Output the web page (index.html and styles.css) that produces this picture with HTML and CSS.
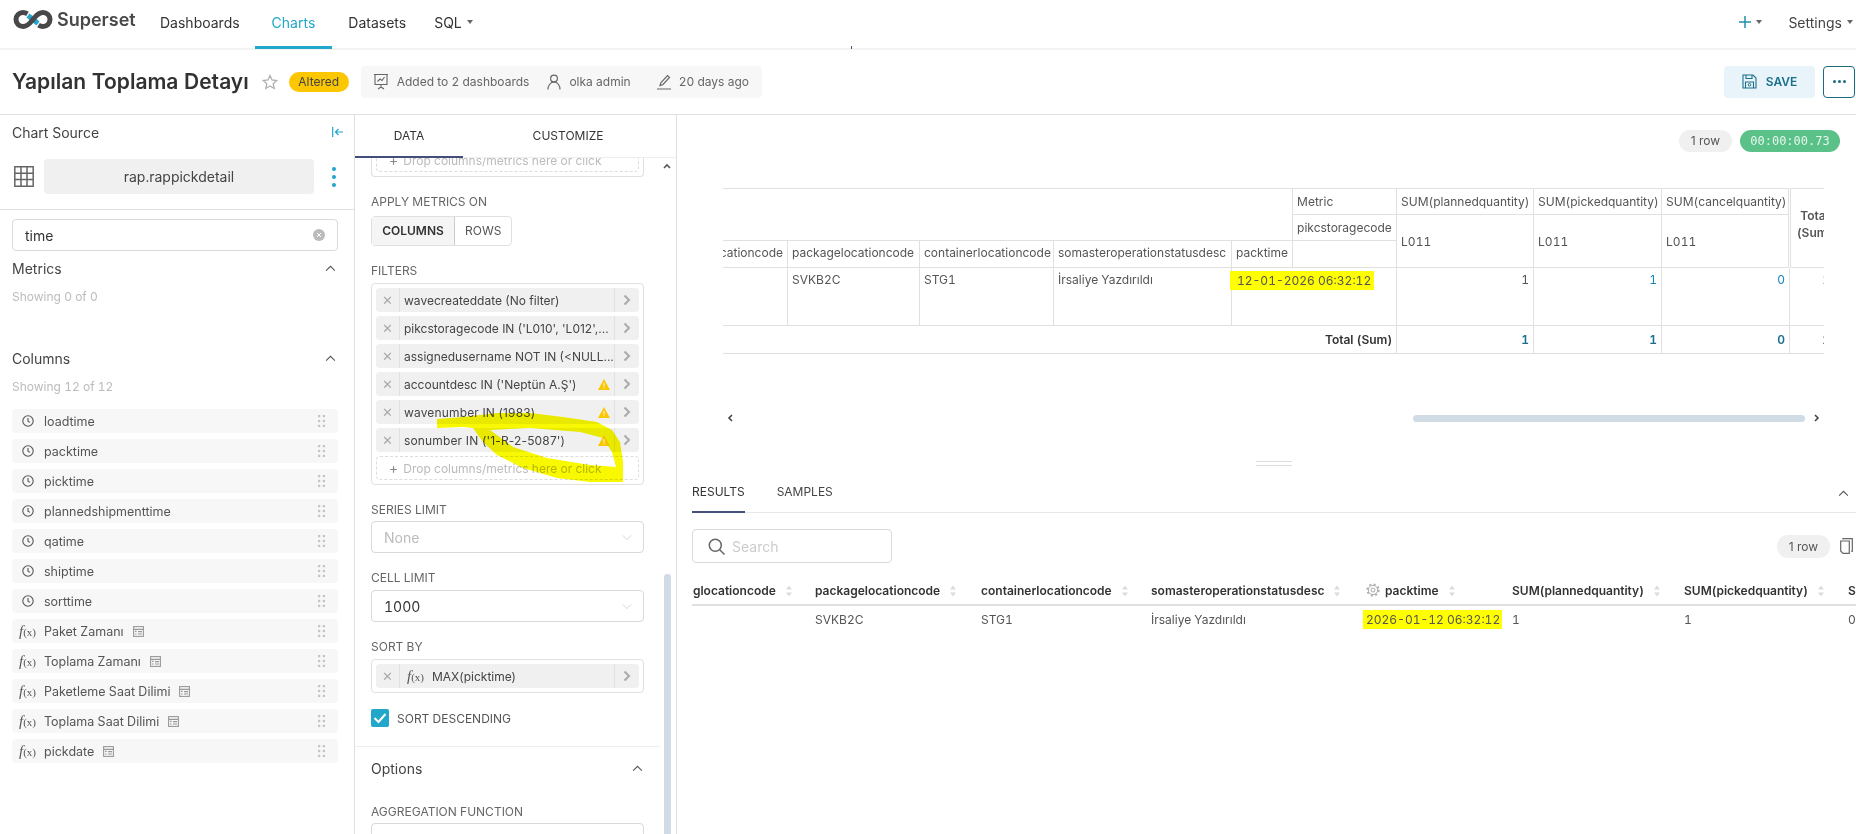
FILE: index.html
```html
<!DOCTYPE html>
<html lang="tr">
  <head>
    <meta charset="UTF-8" />
    <title>Superset</title>
    <link rel="stylesheet" href="styles.css">
  </head>
  <body>
    <svg class="defs" width="0" height="0">
      <symbol id="i-clock" viewBox="0 0 12 12">
        <circle cx="6" cy="6" r="5.2" fill="none" stroke="#555" stroke-width="1.1" />
        <path d="M6 3v3.2l2 1.2" fill="none" stroke="#555" stroke-width="1.1" />
      </symbol>
      <symbol id="i-drag" viewBox="0 0 7 12">
        <g fill="#c4c4c4">
          <rect x="0" y="0" width="2.2" height="2.2" /><rect x="4.8" y="0" width="2.2" height="2.2" />
          <rect x="0" y="4.9" width="2.2" height="2.2" /><rect x="4.8" y="4.9" width="2.2" height="2.2" />
          <rect x="0" y="9.8" width="2.2" height="2.2" /><rect x="4.8" y="9.8" width="2.2" height="2.2" />
        </g>
      </symbol>
      <symbol id="i-sql" viewBox="0 0 11 11">
        <rect x=".6" y=".6" width="9.8" height="9.8" fill="none" stroke="#999" stroke-width="1.1" />
        <path d="M.6 3.4h9.8M5 5.6h4M5 8h4M2 5.4h1.6M2 8h1.6" fill="none" stroke="#999" stroke-width="1.1" />
      </symbol>
      <symbol id="i-chev-up" viewBox="0 0 12 8">
        <path d="M1 6.5 6 1.5l5 5" fill="none" stroke="#555" stroke-width="1.2" />
      </symbol>
      <symbol id="i-chev-down" viewBox="0 0 12 8">
        <path d="M1 1.5 6 6.5l5-5" fill="none" stroke="#ccc" stroke-width="1" />
      </symbol>
      <symbol id="i-chev-right" viewBox="0 0 8 12">
        <path d="M1.500 1.500 6 6l-4.500 4.500" fill="none" stroke="#aaa" stroke-width="2" />
      </symbol>
      <symbol id="i-warn" viewBox="0 0 12 11">
        <path d="M6 0 12 11H0Z" fill="#fcc700" />
        <path d="M6 3.800v3.600M6 8.300v1.100" stroke="#fff" stroke-width="1" />
      </symbol>
      <symbol id="i-sort" viewBox="0 0 8 12">
        <path d="M4 .5 7 4.500H1ZM4 11.500 1 7.500h6Z" fill="#dcdcdc" />
      </symbol>
    </svg>

    <nav class="topnav">
      <a class="brand">
        <svg width="40" height="19" viewBox="0 0 40 19">
          <path d="M15 5.500 25 13.500" stroke="#20a7c9" stroke-width="5" />
          <path d="M14.500 3.800C13 2.900 11.500 2.500 10 2.500A7 7 0 0 0 10 16.500C15 16.500 17 13 20 9.500S25 2.500 30 2.500A7 7 0 0 1 30 16.500C28.500 16.500 27 16.100 25.500 15.200" fill="none" stroke="#484848" stroke-width="5" />
        </svg>
        <span>Superset</span>
      </a>
      <a class="nav-link first">Dashboards</a>
      <a class="nav-link active">Charts</a>
      <a class="nav-link after-active">Datasets</a>
      <a class="nav-link">SQL <b class="caret"></b></a>
      <span class="nav-tick"></span>
      <div class="nav-right">
        <span class="nav-plus">
          <svg width="12" height="12" viewBox="0 0 12 12"><path d="M6 0v12M0 6h12" stroke="#1f8fae" stroke-width="1.500" /></svg>
          <b class="caret"></b>
        </span>
        <span class="nav-settings">Settings <b class="caret"></b></span>
      </div>
    </nav>

    <header class="titlebar">
      <h1>Yapılan Toplama Detayı</h1>
      <svg class="star" width="16" height="16" viewBox="0 0 16 16">
        <path d="M8 1.500 10 6l4.800.5-3.600 3.200 1 4.800L8 12l-4.200 2.500 1-4.800L1.200 6.500 6 6Z" fill="none" stroke="#b0b0b0" stroke-width="1.300" />
      </svg>
      <span class="altered">Altered</span>
      <div class="meta">
        <svg width="16" height="17" viewBox="0 0 16 17">
          <path d="M1 1.500h14M2 1.500v10h12v-10M8 11.500V14M5 16l3-2 3 2M4.500 8.500 7 6l2 1.500L11.500 4" fill="none" stroke="#666" stroke-width="1.100" />
        </svg>
        <span class="meta-text">Added to 2 dashboards</span>
        <svg class="meta-user" width="14" height="16" viewBox="0 0 14 16">
          <circle cx="7" cy="4.500" r="3.400" fill="none" stroke="#666" stroke-width="1.200" />
          <path d="M1 15.500c0-4 2.500-7.500 6-7.500s6 3.500 6 7.500" fill="none" stroke="#666" stroke-width="1.200" />
        </svg>
        <span class="meta-text">olka admin</span>
        <svg class="meta-edit" width="14" height="16" viewBox="0 0 14 16">
          <path d="M3 11.500 4 8.500 10.500 1.500l2 2L6 10.500ZM0 15h14" fill="none" stroke="#666" stroke-width="1.200" />
        </svg>
        <span class="meta-text">20 days ago</span>
      </div>
      <div class="title-actions">
        <button class="btn-save">
          <svg width="15" height="15" viewBox="0 0 15 15">
            <path d="M1 1h10l3 3v10H1ZM4 1v3.500h6V1M3.500 14V8h8v6" fill="none" stroke="#1a6f8c" stroke-width="1.100" />
            <circle cx="7.500" cy="10.800" r="1.300" fill="none" stroke="#1a6f8c" />
          </svg>
          SAVE
        </button>
        <button class="btn-more"><i></i><i></i><i></i></button>
      </div>
    </header>

    <main class="explore">
      <aside class="source">
        <div class="source-head">
          <div class="source-title">
            <span>Chart Source</span>
            <svg width="11" height="10" viewBox="0 0 11 10"><path d="M.7 0v10M11 5H3.500M6.500 2 3.500 5l3 3" fill="none" stroke="#20a7c9" stroke-width="1.200" /></svg>
          </div>
          <div class="source-row">
            <svg width="20" height="21" viewBox="0 0 20 21">
              <path d="M.8.8h18.400v19.400H.8ZM.8 7.200h18.400M.8 13.600h18.400M7 .8v19.400M13 .8v19.400" fill="none" stroke="#666" stroke-width="1.500" />
            </svg>
            <div class="source-name">rap.rappickdetail</div>
            <span class="kebab"><i></i><i></i><i></i></span>
          </div>
        </div>
        <div class="source-body">
          <div class="column-search">
            <span>time</span>
            <svg width="12" height="12" viewBox="0 0 12 12">
              <circle cx="6" cy="6" r="6" fill="#bbb" /><path d="M4 4l4 4M8 4l-4 4" stroke="#fff" />
            </svg>
          </div>
          <div class="list-head list-metrics"><span>Metrics</span><svg width="11" height="7"><use href="#i-chev-up" /></svg></div>
          <div class="showing">Showing 0 of 0</div>
          <div class="list-head list-columns"><span>Columns</span><svg width="11" height="7"><use href="#i-chev-up" /></svg></div>
          <div class="showing">Showing 12 of 12</div>
          <ul class="columns">
            <li><svg class="type" width="12" height="12"><use href="#i-clock" /></svg><span>loadtime</span><svg class="drag" width="7" height="12"><use href="#i-drag" /></svg></li>
            <li><svg class="type" width="12" height="12"><use href="#i-clock" /></svg><span>packtime</span><svg class="drag" width="7" height="12"><use href="#i-drag" /></svg></li>
            <li><svg class="type" width="12" height="12"><use href="#i-clock" /></svg><span>picktime</span><svg class="drag" width="7" height="12"><use href="#i-drag" /></svg></li>
            <li><svg class="type" width="12" height="12"><use href="#i-clock" /></svg><span>plannedshipmenttime</span><svg class="drag" width="7" height="12"><use href="#i-drag" /></svg></li>
            <li><svg class="type" width="12" height="12"><use href="#i-clock" /></svg><span>qatime</span><svg class="drag" width="7" height="12"><use href="#i-drag" /></svg></li>
            <li><svg class="type" width="12" height="12"><use href="#i-clock" /></svg><span>shiptime</span><svg class="drag" width="7" height="12"><use href="#i-drag" /></svg></li>
            <li><svg class="type" width="12" height="12"><use href="#i-clock" /></svg><span>sorttime</span><svg class="drag" width="7" height="12"><use href="#i-drag" /></svg></li>
            <li><span class="fx"><i>f</i>(x)</span><span>Paket Zamanı</span><svg class="sql" width="11" height="11"><use href="#i-sql" /></svg><svg class="drag" width="7" height="12"><use href="#i-drag" /></svg></li>
            <li><span class="fx"><i>f</i>(x)</span><span>Toplama Zamanı</span><svg class="sql" width="11" height="11"><use href="#i-sql" /></svg><svg class="drag" width="7" height="12"><use href="#i-drag" /></svg></li>
            <li><span class="fx"><i>f</i>(x)</span><span>Paketleme Saat Dilimi</span><svg class="sql" width="11" height="11"><use href="#i-sql" /></svg><svg class="drag" width="7" height="12"><use href="#i-drag" /></svg></li>
            <li><span class="fx"><i>f</i>(x)</span><span>Toplama Saat Dilimi</span><svg class="sql" width="11" height="11"><use href="#i-sql" /></svg><svg class="drag" width="7" height="12"><use href="#i-drag" /></svg></li>
            <li><span class="fx"><i>f</i>(x)</span><span>pickdate</span><svg class="sql" width="11" height="11"><use href="#i-sql" /></svg><svg class="drag" width="7" height="12"><use href="#i-drag" /></svg></li>
          </ul>
        </div>
      </aside>

      <section class="controls">
        <div class="control-tabs">
          <div class="control-tab active">DATA</div>
          <div class="control-tab wide">CUSTOMIZE</div>
        </div>
        <div class="control-scroll">
          <svg class="scroll-up" width="8" height="6" viewBox="0 0 8 6"><path d="M1 5 4 2l3 3" fill="none" stroke="#555" stroke-width="1.600" /></svg>
          <div class="scroll-thumb"></div>

          <div class="drop-box cut">
            <div class="dropzone"><b>+</b> Drop columns/metrics here or click</div>
          </div>

          <div class="field">
            <div class="field-label roomy">APPLY METRICS ON</div>
            <div class="btn-group">
              <span class="selected">COLUMNS</span><span>ROWS</span>
            </div>
          </div>

          <div class="field">
            <div class="field-label">FILTERS</div>
            <div class="drop-box">
              <div class="pill"><span class="pill-x">✕</span><span class="pill-label">wavecreateddate (No filter)</span><span class="pill-arrow"><svg width="8" height="12"><use href="#i-chev-right" /></svg></span></div>
              <div class="pill"><span class="pill-x">✕</span><span class="pill-label">pikcstoragecode IN ('L010', 'L012',...</span><span class="pill-arrow"><svg width="8" height="12"><use href="#i-chev-right" /></svg></span></div>
              <div class="pill"><span class="pill-x">✕</span><span class="pill-label">assignedusername NOT IN (&lt;NULL...</span><span class="pill-arrow"><svg width="8" height="12"><use href="#i-chev-right" /></svg></span></div>
              <div class="pill"><span class="pill-x">✕</span><span class="pill-label">accountdesc IN ('Neptün A.Ş')</span><svg class="warn" width="12" height="11"><use href="#i-warn" /></svg><span class="pill-arrow"><svg width="8" height="12"><use href="#i-chev-right" /></svg></span></div>
              <div class="pill"><span class="pill-x">✕</span><span class="pill-label nums">wavenumber IN (1983)</span><svg class="warn" width="12" height="11"><use href="#i-warn" /></svg><span class="pill-arrow"><svg width="8" height="12"><use href="#i-chev-right" /></svg></span></div>
              <div class="pill"><span class="pill-x">✕</span><span class="pill-label nums">sonumber IN ('1-R-2-5087')</span><svg class="warn" width="12" height="11"><use href="#i-warn" /></svg><span class="pill-arrow"><svg width="8" height="12"><use href="#i-chev-right" /></svg></span></div>
              <div class="dropzone"><b>+</b> Drop columns/metrics here or click</div>
            </div>
          </div>

          <div class="field">
            <div class="field-label tight">SERIES LIMIT</div>
            <div class="select muted">None<svg width="10" height="7"><use href="#i-chev-down" /></svg></div>
          </div>

          <div class="field">
            <div class="field-label">CELL LIMIT</div>
            <div class="select">1000<svg width="10" height="7"><use href="#i-chev-down" /></svg></div>
          </div>

          <div class="field">
            <div class="field-label">SORT BY</div>
            <div class="drop-box">
              <div class="pill"><span class="pill-x">✕</span><span class="pill-label"><span class="fx small"><i>f</i>(x)</span>MAX(picktime)</span><span class="pill-arrow"><svg width="8" height="12"><use href="#i-chev-right" /></svg></span></div>
            </div>
          </div>

          <label class="check-row">
            <span class="checkbox"><svg width="14" height="12" viewBox="0 0 14 12"><path d="M1.500 6 5.500 10 12.500 2" fill="none" stroke="#fff" stroke-width="2" /></svg></span>
            SORT DESCENDING
          </label>

          <div class="section-head">
            <span>Options</span>
            <svg width="11" height="7"><use href="#i-chev-up" /></svg>
          </div>

          <div class="field-label agg">AGGREGATION FUNCTION</div>
          <div class="select"></div>
        </div>
      </section>

      <section class="workspace">
        <div class="chart-area">
          <div class="chart-status">
            <span class="row-pill">1 row</span>
            <span class="timer">00:00:00.73</span>
          </div>
          <div class="pivot-clip">
            <table class="pivot">
              <colgroup>
                <col class="p1"><col class="p2"><col class="p3"><col class="p4"><col class="p5">
                <col class="p6"><col class="p7"><col class="p8"><col class="p9"><col class="p10">
              </colgroup>
              <tr class="r1">
                <th colspan="5" rowspan="2" class="blank"></th>
                <th>Metric</th>
                <th>SUM(plannedquantity)</th>
                <th>SUM(pickedquantity)</th>
                <th>SUM(cancelquantity)</th>
                <th rowspan="3" class="total-head">Total<br>(Sum)</th>
              </tr>
              <tr class="r2">
                <th>pikcstoragecode</th>
                <th rowspan="2">L011</th>
                <th rowspan="2">L011</th>
                <th rowspan="2">L011</th>
              </tr>
              <tr class="r3">
                <th class="end">pickinglocationcode</th>
                <th>packagelocationcode</th>
                <th>containerlocationcode</th>
                <th>somasteroperationstatusdesc</th>
                <th>packtime</th>
                <th></th>
              </tr>
              <tr class="r4">
                <td></td>
                <td>SVKB2C</td>
                <td>STG1</td>
                <td>İrsaliye Yazdırıldı</td>
                <td colspan="2"><mark class="pivot-mark">12-01-2026 06:32:12</mark></td>
                <td class="num">1</td>
                <td class="num blue">1</td>
                <td class="num blue">0</td>
                <td class="num last">1</td>
              </tr>
              <tr class="r5">
                <th colspan="6" class="num">Total (Sum)</th>
                <th class="num teal">1</th>
                <th class="num teal">1</th>
                <th class="num teal">0</th>
                <th class="num last">1</th>
              </tr>
            </table>
          </div>
          <div class="pivot-scroll">
            <svg width="6" height="8" viewBox="0 0 6 8"><path d="M5 1 2 4l3 3" fill="none" stroke="#444" stroke-width="1.600" /></svg>
            <div class="pivot-thumb"></div>
            <svg width="6" height="8" viewBox="0 0 6 8"><path d="M1 1l3 3-3 3" fill="none" stroke="#444" stroke-width="1.600" /></svg>
          </div>
        </div>

        <div class="resize-handle"></div>

        <div class="results">
          <div class="result-tabs">
            <span class="result-tab active">RESULTS</span>
            <span class="result-tab">SAMPLES</span>
            <svg class="result-collapse" width="11" height="7"><use href="#i-chev-up" /></svg>
          </div>
          <div class="result-tools">
            <div class="result-search">
              <svg width="17" height="17" viewBox="0 0 17 17"><circle cx="7.300" cy="7.300" r="6" fill="none" stroke="#666" stroke-width="1.500" /><path d="m11.500 11.500 5 5" stroke="#666" stroke-width="1.500" /></svg>
              <span>Search</span>
            </div>
            <span class="row-pill second">1 row</span>
            <svg class="copy" width="13" height="16" viewBox="0 0 13 16"><path d="M3 1.500V.7h9.300v12.600h-1M.7 3h8.600v12.300H3L.7 13Z" fill="none" stroke="#666" stroke-width="1.200" /></svg>
          </div>
          <div class="grid-clip">
            <table class="grid">
              <colgroup>
                <col class="g1"><col class="g2"><col class="g3"><col class="g4"><col class="g5"><col class="g6"><col class="g7"><col class="g8">
              </colgroup>
              <tr>
                <th>pickinglocationcode<svg width="8" height="12"><use href="#i-sort" /></svg></th>
                <th>packagelocationcode<svg width="8" height="12"><use href="#i-sort" /></svg></th>
                <th>containerlocationcode<svg width="8" height="12"><use href="#i-sort" /></svg></th>
                <th>somasteroperationstatusdesc<svg width="8" height="12"><use href="#i-sort" /></svg></th>
                <th><svg class="gear" width="14" height="14" viewBox="0 0 14 14"><circle cx="7" cy="7" r="2" fill="none" stroke="#aaa" /><circle cx="7" cy="7" r="4.700" fill="none" stroke="#aaa" /><circle cx="7" cy="7" r="5.800" fill="none" stroke="#aaa" stroke-width="1.600" stroke-dasharray="2 2.550" /></svg>packtime<svg width="8" height="12"><use href="#i-sort" /></svg></th>
                <th>SUM(plannedquantity)<svg width="8" height="12"><use href="#i-sort" /></svg></th>
                <th>SUM(pickedquantity)<svg width="8" height="12"><use href="#i-sort" /></svg></th>
                <th>SUM(cancelquantity)</th>
              </tr>
              <tr>
                <td></td>
                <td>SVKB2C</td>
                <td>STG1</td>
                <td>İrsaliye Yazdırıldı</td>
                <td><mark class="grid-mark">2026-01-12 06:32:12</mark></td>
                <td>1</td>
                <td>1</td>
                <td>0</td>
              </tr>
            </table>
          </div>
        </div>
      </section>
    </main>

    <svg class="scribble" width="200" height="80" viewBox="430 408 200 80">
      <path fill-rule="evenodd" fill="#f8f800" d="M437 419 463 417 497 413 530 413 563 417 597 422 612 430 620 442 623 462 623 482 590 482 557 478 523 468 497 455 483 442 473 428 463 427 437 428ZM490 430 530 428 580 432 603 438 612 452 616 467 590 465 547 458 513 447Z" />
    </svg>
  </body>
</html>
```

FILE: styles.css
```css
* {
  box-sizing: border-box;
  margin: 0;
  padding: 0;
}

html,
body {
  height: 100%;
  overflow: hidden;
}

body {
  display: flex;
  flex-direction: column;
  font-family: Inter, "Noto Sans", sans-serif;
  font-size: 12px;
  font-variant-numeric: tabular-nums;
  color: #444;
  background: #fff;
  position: relative;
}

.defs {
  position: absolute;
}

/* top nav */
.topnav {
  position: relative;
  display: flex;
  align-items: flex-start;
  height: 50px;
  flex-shrink: 0;
  border-bottom: 2px solid #f3f3f3;
}

.brand {
  display: flex;
  align-items: center;
  gap: 4px;
  width: 132px;
  height: 38px;
  margin-left: 13px;
  font-size: 18px;
  font-weight: 600;
  color: #484848;
}

.nav-link {
  display: flex;
  align-items: center;
  gap: 5px;
  height: 49px;
  padding: 0 14px 5px;
  font-size: 14px;
  color: #333;
}

.nav-link.first {
  padding: 0 15px 5px;
}

.nav-link.active {
  padding: 0 17px 2px;
  color: #20a7c9;
  border-bottom: 3px solid #20a7c9;
}

.nav-link.after-active {
  margin-left: 2px;
}

.nav-tick {
  position: absolute;
  left: 851px;
  top: 46px;
  width: 1px;
  height: 3px;
  background: #444e7c;
}

.caret {
  display: inline-block;
  border-left: 3px solid transparent;
  border-right: 3px solid transparent;
  border-top: 4px solid #666;
}

.nav-right {
  display: flex;
  align-items: center;
  height: 44px;
  margin-left: auto;
  padding-right: 3px;
  font-size: 14px;
  color: #444;
}

.nav-plus {
  display: flex;
  align-items: center;
  gap: 5px;
  margin-right: 26px;
}

.nav-settings {
  display: flex;
  align-items: center;
  gap: 5px;
}

/* title bar */
.titlebar {
  display: flex;
  align-items: center;
  height: 65px;
  flex-shrink: 0;
  padding: 0 1px 1px 12px;
  border-bottom: 1px solid #e0e0e0;
}

.titlebar h1 {
  font-size: 21px;
  font-weight: 600;
  color: #323232;
  white-space: nowrap;
}

.star {
  margin-left: 13px;
}

.altered {
  margin-left: 11px;
  width: 60px;
  height: 20px;
  line-height: 20px;
  text-align: center;
  border-radius: 10px;
  background: #fcc700;
  color: #444;
  font-size: 12px;
}

.meta {
  display: flex;
  align-items: center;
  width: 401px;
  height: 32px;
  margin-left: 12px;
  padding-left: 12px;
  border-radius: 4px;
  background: #f7f7f7;
  font-size: 12px;
  color: #666;
}

.meta-text {
  margin-left: 8px;
  white-space: nowrap;
}

.meta-user {
  margin-left: 18px;
}

.meta-edit {
  margin-left: 26px;
}

.title-actions {
  display: flex;
  gap: 8px;
  margin-left: auto;
}

.btn-save {
  display: flex;
  align-items: center;
  justify-content: center;
  gap: 9px;
  width: 91px;
  height: 32px;
  border: 0;
  border-radius: 4px;
  background: #e8f4f9;
  font: 600 12px Inter, sans-serif;
  color: #1a6f8c;
}

.btn-more {
  display: flex;
  align-items: center;
  justify-content: center;
  gap: 2px;
  width: 32px;
  height: 32px;
  border: 1px solid #1a6a80;
  border-radius: 4px;
  background: #fff;
}

.btn-more i {
  width: 3px;
  height: 3px;
  border-radius: 50%;
  background: #1a6a80;
}

/* layout */
.explore {
  display: flex;
  flex: 1;
  min-height: 0;
}

/* left panel */
.source {
  width: 355px;
  flex-shrink: 0;
  border-right: 1px solid #e0e0e0;
}

.source-head {
  height: 95px;
  border-bottom: 1px solid #e0e0e0;
  padding: 9px 11px 0 12px;
}

.source-title {
  display: flex;
  align-items: center;
  justify-content: space-between;
  height: 16px;
  font-size: 14px;
  color: #444;
}

.source-row {
  display: flex;
  align-items: center;
  gap: 10px;
  margin-top: 19px;
  padding-left: 2px;
}

.source-name {
  width: 270px;
  height: 35px;
  line-height: 35px;
  text-align: center;
  border-radius: 4px;
  background: #f0f0f0;
  font-size: 14px;
  color: #444;
}

.kebab {
  display: flex;
  flex-direction: column;
  gap: 4px;
  margin-left: 8px;
}

.kebab i {
  width: 4px;
  height: 4px;
  border-radius: 50%;
  background: #20a7c9;
}

.source-body {
  padding: 9px 16px 0 12px;
}

.column-search {
  display: flex;
  align-items: center;
  justify-content: space-between;
  height: 32px;
  padding: 0 12px;
  border: 1px solid #d9d9e0;
  border-radius: 4px;
  font-size: 14px;
  color: #333;
}

.list-head {
  display: flex;
  align-items: center;
  justify-content: space-between;
  height: 18px;
  padding: 0 2px 2px 0;
  font-size: 14px;
  color: #444;
}

.list-metrics {
  margin-top: 9px;
}

.list-columns {
  margin-top: 45px;
}

.showing {
  margin-top: 11px;
  height: 16px;
  line-height: 16px;
  font-size: 12px;
  color: #bbb;
}

.columns {
  list-style: none;
  display: flex;
  flex-direction: column;
  gap: 6px;
  margin-top: 14px;
}

.columns li {
  display: flex;
  align-items: center;
  height: 24px;
  padding-left: 10px;
  border-radius: 4px;
  background: #f7f7f7;
  font-size: 12.500px;
  color: #555;
}

.columns .type {
  margin-right: 10px;
}

.columns .sql {
  margin-left: 9px;
}

.columns .drag {
  margin-left: auto;
  margin-right: 13px;
}

.fx {
  width: 25px;
  margin-left: -3px;
  font-family: "Liberation Serif", serif;
  font-size: 11px;
  color: #555;
  white-space: nowrap;
}

.fx i {
  font-size: 15px;
}

.fx.small {
  display: inline-block;
  margin: 0 0 0 3px;
}

/* middle panel */
.controls {
  width: 322px;
  flex-shrink: 0;
  border-right: 1px solid #e0e0e0;
  display: flex;
  flex-direction: column;
  min-height: 0;
}

.control-tabs {
  display: flex;
  height: 43px;
  flex-shrink: 0;
  border-bottom: 1px solid #eee;
}

.control-tab {
  width: 108px;
  height: 43px;
  line-height: 41px;
  text-align: center;
  font-size: 12px;
  color: #333;
}

.control-tab.wide {
  width: 210px;
}

.control-tab.active {
  border-bottom: 2px solid #444e7c;
}

.control-scroll {
  position: relative;
  flex: 1;
  min-height: 0;
  overflow: hidden;
  padding-left: 16px;
}

.scroll-up {
  position: absolute;
  left: 308px;
  top: 5px;
}

.scroll-thumb {
  position: absolute;
  left: 309px;
  top: 416px;
  bottom: 0;
  width: 7px;
  border-radius: 3px 3px 0 0;
  background: #d1dbe5;
}

.drop-box {
  display: flex;
  flex-direction: column;
  gap: 4px;
  width: 273px;
  padding: 4px;
  border: 1px solid #e0e0e0;
  border-radius: 4px;
}

.drop-box.cut {
  height: 19px;
  justify-content: flex-end;
  overflow: hidden;
  border-top: 0;
  border-radius: 0 0 4px 4px;
}

.dropzone {
  flex-shrink: 0;
  height: 24px;
  line-height: 22px;
  padding-left: 12px;
  border: 1px dashed #dcdcdc;
  border-radius: 4px;
  font-size: 12px;
  color: #bbb;
  white-space: nowrap;
}

.dropzone b {
  font-size: 14px;
  font-weight: 400;
  color: #888;
  margin-right: 2px;
}

.field {
  margin-top: 17px;
}

.field-label {
  height: 16px;
  line-height: 16px;
  margin-bottom: 4px;
  font-size: 12px;
  color: #666;
}

.field-label.roomy {
  margin-bottom: 6px;
}

.field-label.tight {
  margin-bottom: 3px;
}

.btn-group {
  display: inline-flex;
  height: 30px;
  border: 1px solid #e0e0e0;
  border-radius: 4px;
  font-size: 12px;
  line-height: 28px;
  color: #555;
}

.btn-group span {
  padding: 0 10px;
}

.btn-group .selected {
  width: 83px;
  padding: 0;
  text-align: center;
  background: #f5f5f5;
  border-right: 1px solid #ccc;
  font-weight: 600;
  color: #333;
}

.pill {
  display: flex;
  align-items: center;
  height: 24px;
  border-radius: 4px;
  background: #f0f0f0;
  font-size: 12px;
  color: #444;
}

.pill-x {
  width: 24px;
  height: 24px;
  line-height: 24px;
  text-align: center;
  flex-shrink: 0;
  border-right: 1px solid #e0e0e0;
  font-size: 13px;
  color: #aaa;
}

.pill-label {
  flex: 1;
  padding-left: 4px;
  font-variant-numeric: normal;
  white-space: nowrap;
  overflow: hidden;
}

.pill-label.nums {
  letter-spacing: .15px;
}

.pill-arrow {
  display: flex;
  align-items: center;
  justify-content: center;
  width: 25px;
  height: 24px;
  flex-shrink: 0;
  border-left: 1px solid #e0e0e0;
}

.warn {
  flex-shrink: 0;
  margin-right: 4px;
}

.select {
  display: flex;
  align-items: center;
  justify-content: space-between;
  width: 273px;
  height: 32px;
  padding: 0 11px 0 12px;
  border: 1px solid #d9d9d9;
  border-radius: 4px;
  font-size: 14px;
  color: #333;
}

.select.muted {
  color: #bbb;
}

.check-row {
  display: flex;
  align-items: center;
  gap: 8px;
  margin-top: 16px;
  height: 18px;
  font-size: 12px;
  color: #555;
}

.checkbox {
  display: flex;
  align-items: center;
  justify-content: center;
  width: 18px;
  height: 18px;
  border-radius: 2px;
  background: #20a7c9;
}

.section-head {
  display: flex;
  align-items: center;
  justify-content: space-between;
  width: 305px;
  height: 44px;
  margin: 19px 0 0 -16px;
  padding: 0 17px 0 16px;
  border-top: 1px solid #eee;
  font-size: 14px;
  color: #444;
}

.field-label.agg {
  margin-top: 14px;
  margin-bottom: 3px;
}

/* right side */
.workspace {
  flex: 1;
  min-width: 0;
  overflow: hidden;
}

.chart-area {
  height: 346px;
  padding: 15px 0 0 46px;
}

.chart-status {
  display: flex;
  justify-content: flex-end;
  gap: 8px;
  height: 22px;
  padding-right: 16px;
}

.row-pill {
  display: inline-block;
  height: 22px;
  line-height: 22px;
  padding: 0 12px;
  border-radius: 11px;
  background: #f0f0f0;
  font-size: 12px;
  font-variant-numeric: normal;
  color: #555;
}

.timer {
  width: 100px;
  height: 22px;
  line-height: 22px;
  text-align: center;
  border-radius: 11px;
  background: #5ac189;
  font-family: "DejaVu Sans Mono", monospace;
  font-size: 12px;
  color: #e6f6ec;
}

.pivot-clip {
  width: 1101px;
  margin-top: 36px;
  overflow: hidden;
}

.pivot {
  table-layout: fixed;
  border-collapse: collapse;
  width: 1192px;
  margin-left: -70px;
  border-top: 1px solid #e0e0e0;
  border-bottom: 1px solid #e0e0e0;
  font-size: 12px;
  color: #555;
}

.p1 { width: 134px; }
.p2 { width: 132px; }
.p3 { width: 134px; }
.p4 { width: 178px; }
.p5 { width: 61px; }
.p6 { width: 104px; }
.p7 { width: 137px; }
.p8 { width: 128px; }
.p9 { width: 128px; }
.p10 { width: 56px; }

.pivot th,
.pivot td {
  padding: 0 4px;
  border: 1px solid #e0e0e0;
  font-weight: 400;
  text-align: left;
  white-space: nowrap;
}

.pivot th.blank {
  border-left: 0;
}

.pivot .end {
  text-align: right;
  padding-right: 4px;
}

.pivot td {
  vertical-align: top;
  padding-top: 4px;
}

.r1 { height: 26px; }
.r2 { height: 26px; }
.r3 { height: 27px; }
.r4 { height: 58px; }
.r5 { height: 28px; }

.r3 th {
  padding-bottom: 3px;
}

.pivot .total-head {
  border-left: 3px double #e0e0e0;
  font-weight: 600;
  text-align: center;
  line-height: 17px;
  padding: 0 12px 8px 5px;
}

.pivot .num {
  text-align: right;
}

.pivot .last {
  padding-right: 15px;
}

.pivot th.num {
  font-weight: 600;
  color: #333;
  vertical-align: middle;
}

.pivot .blue {
  color: #1a85c0;
}

.pivot th.teal {
  color: #1a6f8c;
}

.pivot-mark {
  display: inline-block;
  margin: -1px 0 0 -6px;
  padding: 2px 3px 2px 7px;
  background: #ffff00;
  color: #555;
}

.pivot-scroll {
  display: flex;
  align-items: center;
  width: 1101px;
  height: 8px;
  margin-top: 60px;
  padding: 0 4px;
}

.pivot-thumb {
  width: 392px;
  height: 7px;
  margin: 0 9px 0 auto;
  border-radius: 4px;
  background: #d1dbe5;
}

.resize-handle {
  width: 36px;
  height: 5px;
  margin: 0 0 0 579px;
  border-top: 1px solid #ddd;
  border-bottom: 1px solid #ddd;
}

.results {
  padding-left: 15px;
  margin-top: 10px;
}

.result-tabs {
  position: relative;
  display: flex;
  gap: 32px;
  height: 37px;
  border-bottom: 1px solid #e8e8e8;
  font-size: 12px;
  color: #444;
}

.result-tab {
  height: 37px;
  line-height: 32px;
}

.result-tab.active {
  border-bottom: 2px solid #444e7c;
  color: #333;
}

.result-collapse {
  position: absolute;
  left: 1146px;
  top: 14px;
}

.result-tools {
  display: flex;
  align-items: center;
  height: 34px;
  margin-top: 16px;
}

.result-search {
  display: flex;
  align-items: center;
  gap: 7px;
  width: 200px;
  height: 34px;
  padding-left: 15px;
  border: 1px solid #d9d9e0;
  border-radius: 4px;
  font-size: 14px;
  color: #ccc;
}

.row-pill.second {
  height: 23px;
  line-height: 23px;
  margin-left: auto;
}

.copy {
  flex-shrink: 0;
  margin: 0 3px 0 10px;
}

.grid-clip {
  margin-top: 16px;
  overflow: hidden;
}

.grid {
  table-layout: fixed;
  border-collapse: collapse;
  width: 1310px;
  margin-left: -34px;
  font-size: 12px;
  color: #555;
}

.g1 { width: 157px; }
.g2 { width: 166px; }
.g3 { width: 170px; }
.g4 { width: 215px; }
.g5 { width: 146px; }
.g6 { width: 172px; }
.g7 { width: 164px; }
.g8 { width: 120px; }

.grid th {
  height: 26px;
  padding-bottom: 2px;
  border-bottom: 2px solid #e0e0e0;
  font-weight: 600;
  color: #333;
  text-align: left;
  white-space: nowrap;
}

.grid th svg {
  margin-left: 9px;
  vertical-align: -2px;
}

.grid th .gear {
  margin: 0 5px 0 0;
}

.grid td {
  height: 28px;
  white-space: nowrap;
}

.grid-mark {
  display: inline-block;
  margin-left: -3px;
  padding: 2px 2px 2px 3px;
  background: #ffff00;
  color: #555;
}

/* marker stroke drawn over the filters */
.scribble {
  position: absolute;
  left: 430px;
  top: 408px;
  mix-blend-mode: multiply;
  pointer-events: none;
}
```
